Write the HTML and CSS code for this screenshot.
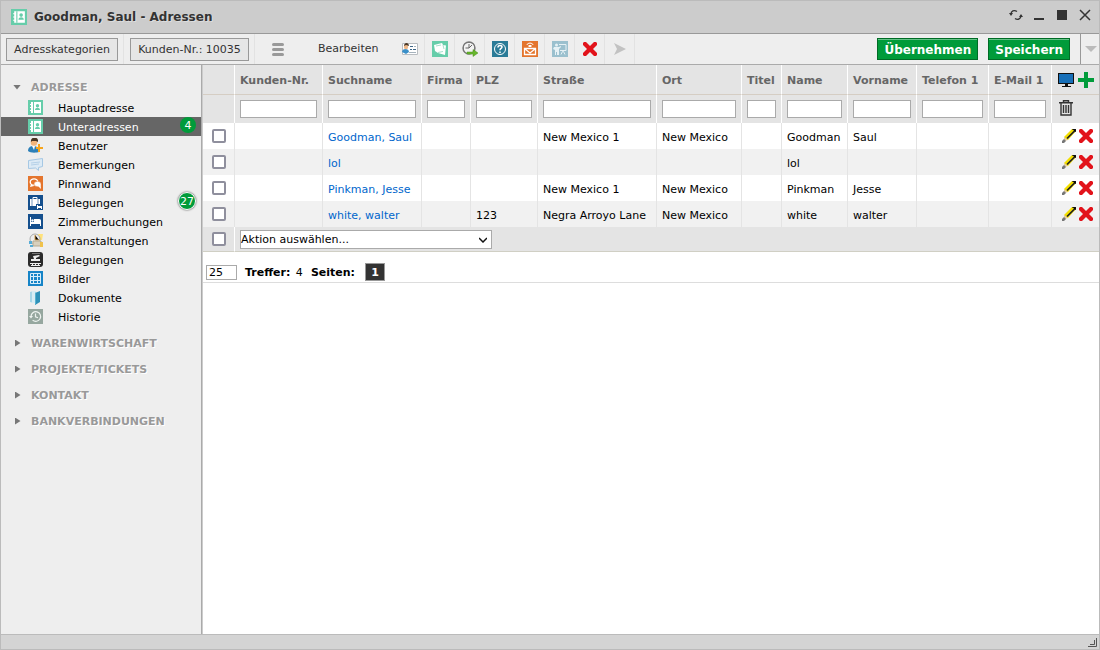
FILE: index.html
```html
<!DOCTYPE html>
<html lang="de">
<head>
<meta charset="utf-8">
<title>Goodman, Saul - Adressen</title>
<link rel="stylesheet" href="styles.css">
</head>
<body>
<svg class="sprite" aria-hidden="true">
  <symbol id="book" viewBox="0 0 15 15"><path fill="#66cdaa" d="M0 0h15v15H0z"/><path fill="#fff" d="M3 2h10v11H3zM2 4h2v1H2zM2 7h2v1H2zM2 10h2v1H2z"/><path fill="#66cdaa" d="M5 2h1v11H5zM7 10c0-3 5-3 5 0z"/><circle cx="9.500" cy="5.700" r="1.700" fill="#66cdaa"/></symbol>
  <symbol id="user" viewBox="0 0 15 15"><path fill="#2d80b8" d="M0 13c0-4 3-5 5-5 4 0 6 2 6 6-3 1-9 1-11-1z"/><path fill="#fff" d="M4 8l2 4 1-4z"/><circle cx="6" cy="4.500" r="3.300" fill="#f2b47a"/><path fill="#493524" d="M3 4c-1-5 6-6 7-2v2L8 3 4 3z"/><path fill="#f7a51c" d="M10 6h2v3h3v2h-3v3h-2v-3H8V9h2z"/></symbol>
  <symbol id="notes" viewBox="0 0 15 15"><path fill="#dceaf5" stroke="#a6c8e4" d="M.5 3.500l14-2v8l-4 1v3l-3-2.500-7 .5z"/><path stroke="#b5d1e8" d="M3 6l9-1M3 8l8-1"/></symbol>
  <symbol id="chat" viewBox="0 0 15 15"><path fill="#e4752d" d="M0 0h15v15H0z"/><ellipse cx="6" cy="6" rx="3.800" ry="3.200" fill="none" stroke="#fff" stroke-width="1.300"/><path fill="#fff" d="M3 8l-1 3 4-1z"/><ellipse cx="9.500" cy="8" rx="3.500" ry="2.700" fill="#fff" stroke="#e4752d" stroke-width=".5"/><path fill="#fff" d="M10 10l3 3-.5-5z"/></symbol>
  <symbol id="bag" viewBox="0 0 15 15"><path fill="#144f8d" d="M0 0h15v15H0z"/><path fill="#fff" d="M2 4h10v7H2z"/><path fill="none" stroke="#fff" d="M5 4V2.500h4V4"/><path stroke="#144f8d" stroke-width=".6" d="M4 4v7M10 4v7"/><path fill="#144f8d" d="M8 9h7v5H8z"/><path fill="#fff" d="M9 10h1v1h4v3h-1v-1h-3v1H9z"/></symbol>
  <symbol id="bed" viewBox="0 0 15 15"><path fill="#144f8d" d="M0 0h15v15H0z"/><path fill="#fff" d="M2 3h1v5h10v4h-1v-2H3v2H2zM6 5h5c2 0 2 1 2 3H6z"/><circle cx="4.500" cy="6.500" r="1.200" fill="#fff"/></symbol>
  <symbol id="event" viewBox="0 0 15 15"><path fill="#ffe27b" d="M10 1h5l-1 6h-3z"/><circle cx="7" cy="6" r="5" fill="#eee" stroke="#aaa"/><path stroke="#d6a04d" d="M7 2v5h4"/><path fill="#d8d0bd" stroke="#b5aa91" d="M5 8h8v5H5z"/><path fill="#56add7" d="M1 8h3v3H1zM2 12h3v2H2z"/><path fill="#f0c24b" d="M12 9h3v5h-3z"/></symbol>
  <symbol id="desk" viewBox="0 0 15 15"><rect width="15" height="15" rx="3" fill="#2b2b2b"/><path fill="#eee" d="M5 4l6-1 1 1-4 2v1h4v2H3V7h3zM2 11h11v1H2zM3 13h1v-1h1v1h2v-1h1v1h2v-1h1v1h1v1H3z"/><path fill="#777" d="M4 1h8v1H4z"/></symbol>
  <symbol id="grid" viewBox="0 0 15 15"><path fill="#1684c7" d="M0 0h15v15H0z"/><path fill="none" stroke="#d7edfa" d="M2.500 2.500h10v10h-10zM5.500 2v11M9.500 2v11M2 5.500h11M2 9.500h11"/></symbol>
  <symbol id="docs" viewBox="0 0 15 15"><path fill="#a8d6e7" d="M2 2l4-1v12l-4-1z"/><path fill="#d7edf4" d="M4 1h4v12H4z"/><path fill="#2e91b8" d="M7 3l5-2v11l-5 3z"/><path fill="#56b1d0" d="M7 3l1-.5V14l-1 1z"/></symbol>
  <symbol id="history" viewBox="0 0 15 15"><path fill="#96a79f" d="M0 0h15v15H0z"/><path fill="none" stroke="#eef3f0" stroke-width="1.200" d="M3 7.500a4.800 4.800 0 1 1 1.600 3.600M7.500 4.500v3.300l2.500 1"/><path fill="#eef3f0" d="M1 7h4L3 9.500z"/></symbol>
  <symbol id="card" viewBox="0 0 16 16"><path fill="#fff" stroke="#b9bdc1" d="M.5 2.500h15v11h-15z"/><path fill="#3b8fc8" d="M0 11c0-4 7-4 7 0l-3 2z"/><circle cx="4" cy="6" r="2.200" fill="#efb98a"/><path fill="#4c3724" d="M2 5c0-4 5-4 5 0L4 4z"/><path stroke="#3e6688" d="M8 5.500h3M8 8.500h2M11 8.500h3"/><path stroke="#a6b3bd" d="M12 5.500h2M7 11.500h7"/></symbol>
  <symbol id="note" viewBox="0 0 16 16"><path fill="#66cdaa" d="M0 0h16v16H0z"/><path fill="#fff" d="M2 4l8-2 1 2 3 .5L13 14l-7-2-3-2z"/><path fill="none" stroke="#a5e1cc" d="M11 4l1 4M4 5l5-1M6 11.500l5-1"/></symbol>
  <symbol id="clock" viewBox="0 0 16 16"><circle cx="7" cy="7" r="6" fill="#f3f3f3" stroke="#777" stroke-width="1.400"/><path fill="none" stroke="#666" d="M7 3v4H3.500M7 7l3-3M7 1v1M1 7h1M12 7h1"/><path fill="#67b62c" stroke="#49921a" stroke-width=".5" d="M5 11h6V8.500l5 3.500-5 3.500V13H5z"/></symbol>
  <symbol id="help" viewBox="0 0 16 16"><path fill="#2a7b97" d="M0 0h16v16H0z"/><circle cx="8" cy="8" r="5.500" fill="none" stroke="#fff"/><path fill="none" stroke="#fff" stroke-width="1.500" d="M6 6.500c0-3 4-2.500 4-.5 0 1.500-2 1.300-2 3.200M8 10.500V12"/></symbol>
  <symbol id="mail" viewBox="0 0 16 16"><path fill="#e4752d" d="M0 0h16v16H0z"/><path fill="none" stroke="#fff" stroke-width="1.300" d="M2.500 7.500h11v6h-11zM3 8l5 4 5-4"/><path fill="none" stroke="#fff" d="M5 4c0-2.500 6-2.500 6 0M6 5.500c1-1.500 3-1.500 4 0"/><path fill="#fff" d="M7 4h2v2H7z"/></symbol>
  <symbol id="train" viewBox="0 0 16 16"><path fill="#9bc0ce" d="M0 0h16v16H0z"/><circle cx="4.500" cy="4" r="1.500" fill="#e6f1f5"/><path fill="#e6f1f5" d="M2 6h5l2-1v1L7 8v6H5v-3H4v3H3V9L1 8z"/><path fill="none" stroke="#e6f1f5" d="M7 3.500h7v6H8M9 13.500l1.500-3h1l1.500 3"/></symbol>
  <symbol id="cross" viewBox="0 0 14 14"><path fill="#e2131b" d="M1 0h2l4 4 4-4h2l1 1v2l-4 4 4 4v2l-1 1h-2l-4-4-4 4H1l-1-1v-2l4-4-4-4V1z"/></symbol>
  <symbol id="pencil" viewBox="0 0 14 14"><path fill="#f4df00" d="M2 8l8-8h4v2l-8 9H4z"/><path stroke="#222" stroke-width="1.700" d="M5 9.500L13.500 1"/><path stroke="#222" stroke-width=".8" d="M10 0h4v3"/><path fill="#e3cba7" d="M2 8l4 3-3 1-1-1z"/><path fill="#777" d="M2 10l2 2-2 2H0v-2z"/></symbol>
</svg>
<div class="window">
  <header class="titlebar">
    <svg class="app-icon"><use href="#book"/></svg>
    <h1>Goodman, Saul - Adressen</h1>
    <div class="window-controls">
      <button aria-label="Neu laden"><svg viewBox="0 0 14 12"><path fill="none" stroke="#333" stroke-width="1.300" d="M8 2.500C5 .5 2 2 2 5M6 9.500c3 2 6 0 6-3"/><path fill="#333" d="M0 4h4L2 7zM10 8l2-3 2 3z"/></svg></button>
      <button aria-label="Minimieren"><svg viewBox="0 0 14 12"><path fill="#333" d="M2 9h10v2H2z"/></svg></button>
      <button aria-label="Maximieren"><svg viewBox="0 0 14 12"><path fill="#333" d="M2 1h10v10H2z"/></svg></button>
      <button aria-label="Schließen"><svg viewBox="0 0 14 12"><path fill="none" stroke="#333" stroke-width="1.500" d="M2 1l10 10M12 1L2 11"/></svg></button>
    </div>
  </header>
  <div class="toolbar">
    <div class="tool-cell"><button class="plain">Adresskategorien</button></div>
    <div class="tool-cell"><button class="plain wide">Kunden-Nr.: 10035</button></div>
    <div class="tool-cell edit-cell">
      <button class="icon-button" aria-label="Menü"><svg class="bars" viewBox="0 0 12 13"><path stroke="#999" stroke-width="3" stroke-linecap="round" d="M1.500 1.500h9M1.500 6.500h9M1.500 11.500h9"/></svg></button>
      <span>Bearbeiten</span>
      <button class="icon-button" aria-label="Visitenkarte"><svg><use href="#card"/></svg></button>
    </div>
    <div class="tool-cell icon-cell"><button class="icon-button" aria-label="Notiz"><svg><use href="#note"/></svg></button></div>
    <div class="tool-cell icon-cell"><button class="icon-button" aria-label="Wiedervorlage"><svg><use href="#clock"/></svg></button></div>
    <div class="tool-cell icon-cell"><button class="icon-button" aria-label="Hilfe"><svg><use href="#help"/></svg></button></div>
    <div class="tool-cell icon-cell"><button class="icon-button" aria-label="E-Mail"><svg><use href="#mail"/></svg></button></div>
    <div class="tool-cell icon-cell"><button class="icon-button" aria-label="Schulung"><svg><use href="#train"/></svg></button></div>
    <div class="tool-cell icon-cell"><button class="icon-button" aria-label="Löschen"><svg class="small"><use href="#cross"/></svg></button></div>
    <div class="tool-cell icon-cell"><button class="icon-button" aria-label="Weiter"><svg viewBox="0 0 16 16"><path fill="#c2c2c2" d="M2 2l12 6-12 6 3-6z"/></svg></button></div>
    <div class="save-actions">
      <button class="primary">Übernehmen</button>
      <button class="primary">Speichern</button>
    </div>
    <button class="more" aria-label="Mehr"><svg viewBox="0 0 12 6"><path fill="#bbb" d="M0 0h12L6 6z"/></svg></button>
  </div>
  <div class="body">
    <nav class="sidebar">
      <section>
        <h2 class="open">ADRESSE</h2>
        <ul>
          <li><a href="#"><svg><use href="#book"/></svg>Hauptadresse</a></li>
          <li><a href="#" class="active"><svg><use href="#book"/></svg>Unteradressen<span class="badge">4</span></a></li>
          <li><a href="#"><svg><use href="#user"/></svg>Benutzer</a></li>
          <li><a href="#"><svg><use href="#notes"/></svg>Bemerkungen</a></li>
          <li><a href="#"><svg><use href="#chat"/></svg>Pinnwand</a></li>
          <li><a href="#"><svg><use href="#bag"/></svg>Belegungen<span class="badge ringed">27</span></a></li>
          <li><a href="#"><svg><use href="#bed"/></svg>Zimmerbuchungen</a></li>
          <li><a href="#"><svg><use href="#event"/></svg>Veranstaltungen</a></li>
          <li><a href="#"><svg><use href="#desk"/></svg>Belegungen</a></li>
          <li><a href="#"><svg><use href="#grid"/></svg>Bilder</a></li>
          <li><a href="#"><svg><use href="#docs"/></svg>Dokumente</a></li>
          <li><a href="#"><svg><use href="#history"/></svg>Historie</a></li>
        </ul>
      </section>
      <section><h2>WARENWIRTSCHAFT</h2></section>
      <section><h2>PROJEKTE/TICKETS</h2></section>
      <section><h2>KONTAKT</h2></section>
      <section><h2>BANKVERBINDUNGEN</h2></section>
    </nav>
    <main>
      <table>
        <colgroup><col class="c-check"><col class="c-no"><col class="c-search"><col class="c-firm"><col class="c-zip"><col class="c-street"><col class="c-city"><col class="c-title"><col class="c-name"><col class="c-first"><col class="c-phone"><col class="c-mail"><col class="c-tools"></colgroup>
        <thead>
          <tr class="heads"><th></th><th>Kunden-Nr.</th><th>Suchname</th><th>Firma</th><th>PLZ</th><th>Straße</th><th>Ort</th><th>Titel</th><th>Name</th><th>Vorname</th><th>Telefon 1</th><th>E-Mail 1</th>
            <th><div class="tools"><button class="icon-button" aria-label="Spalten"><svg viewBox="0 0 16 16"><path fill="#111" d="M0 1h16v11H0zM7 12h3v2h3v1H4v-1h3z"/><path fill="#176fb8" d="M1 2h14v9H1z"/></svg></button><button class="icon-button" aria-label="Neu"><svg viewBox="0 0 16 16"><path fill="#009b3a" d="M6 0h4v6h6v4h-6v6H6v-6H0V6h6z"/></svg></button></div></th></tr>
          <tr class="filters"><td></td><td><input aria-label="Kunden-Nr."></td><td><input aria-label="Suchname"></td><td><input aria-label="Firma"></td><td><input aria-label="PLZ"></td><td><input aria-label="Straße"></td><td><input aria-label="Ort"></td><td><input aria-label="Titel"></td><td><input aria-label="Name"></td><td><input aria-label="Vorname"></td><td><input aria-label="Telefon 1"></td><td><input aria-label="E-Mail 1"></td>
            <td><div class="tools"><button class="icon-button" aria-label="Filter leeren"><svg viewBox="0 0 16 16"><path fill="none" stroke="#333" stroke-width="1.400" d="M1 2.700h14M5.500 2V.700h5V2M3 3v12h10V3M5.500 5v8M8 5v8M10.500 5v8"/></svg></button></div></td></tr>
        </thead>
        <tbody>
          <tr><td><input type="checkbox" aria-label="Goodman, Saul auswählen"></td><td></td><td><a href="#">Goodman, Saul</a></td><td></td><td></td><td>New Mexico 1</td><td>New Mexico</td><td></td><td>Goodman</td><td>Saul</td><td></td><td></td><td><div class="tools row-tools"><button class="icon-button" aria-label="Bearbeiten"><svg><use href="#pencil"/></svg></button><button class="icon-button" aria-label="Löschen"><svg><use href="#cross"/></svg></button></div></td></tr>
          <tr><td><input type="checkbox" aria-label="lol auswählen"></td><td></td><td><a href="#">lol</a></td><td></td><td></td><td></td><td></td><td></td><td>lol</td><td></td><td></td><td></td><td><div class="tools row-tools"><button class="icon-button" aria-label="Bearbeiten"><svg><use href="#pencil"/></svg></button><button class="icon-button" aria-label="Löschen"><svg><use href="#cross"/></svg></button></div></td></tr>
          <tr><td><input type="checkbox" aria-label="Pinkman, Jesse auswählen"></td><td></td><td><a href="#">Pinkman, Jesse</a></td><td></td><td></td><td>New Mexico 1</td><td>New Mexico</td><td></td><td>Pinkman</td><td>Jesse</td><td></td><td></td><td><div class="tools row-tools"><button class="icon-button" aria-label="Bearbeiten"><svg><use href="#pencil"/></svg></button><button class="icon-button" aria-label="Löschen"><svg><use href="#cross"/></svg></button></div></td></tr>
          <tr><td><input type="checkbox" aria-label="white, walter auswählen"></td><td></td><td><a href="#">white, walter</a></td><td></td><td>123</td><td>Negra Arroyo Lane</td><td>New Mexico</td><td></td><td>white</td><td>walter</td><td></td><td></td><td><div class="tools row-tools"><button class="icon-button" aria-label="Bearbeiten"><svg><use href="#pencil"/></svg></button><button class="icon-button" aria-label="Löschen"><svg><use href="#cross"/></svg></button></div></td></tr>
        </tbody>
        <tfoot>
          <tr><td><input type="checkbox" aria-label="Alle auswählen"></td><td colspan="12"><div class="select-wrap"><select aria-label="Aktion"><option>Aktion auswählen...</option></select><svg viewBox="0 0 8 6"><path fill="none" stroke="#111" stroke-width="1.500" d="M0 1l4 4 4-4"/></svg></div></td></tr>
        </tfoot>
      </table>
      <div class="pager">
        <input value="25" aria-label="Treffer pro Seite">
        <span class="hits"><b>Treffer:</b> 4</span>
        <b class="pages">Seiten:</b>
        <button class="page">1</button>
      </div>
    </main>
  </div>
  <footer><svg viewBox="0 0 9 9"><path fill="none" stroke="#555" d="M0 8.500h8.500V0M2 6.500h4.500V2"/></svg></footer>
</div>
</body>
</html>
```

FILE: styles.css
```css
* { box-sizing: border-box; }
body { margin: 0; font: 11px/14px "DejaVu Sans", sans-serif; color: #000; }
button, input, select { font: inherit; margin: 0; border-radius: 0; }
a { color: inherit; text-decoration: none; }
svg { display: block; width: 16px; height: 16px; }
.sprite { position: absolute; width: 0; height: 0; }

.window { display: flex; flex-direction: column; min-height: 100vh; border: 1px solid #bbb; background: #fff; }

.titlebar { display: flex; align-items: center; gap: 7px; height: 33px; padding: 0 7px 0 10px; background: #ccc; border-bottom: 1px solid #999; }
.titlebar h1 { margin: 0; font-size: 12px; color: #333; text-shadow: 1px 1px #ddd; }
.window-controls { display: flex; gap: 9px; margin-left: auto; padding-bottom: 4px; }
.window-controls button { padding: 0; border: 0; background: none; }
.window-controls svg { width: 14px; height: 12px; }

.toolbar { display: flex; height: 31px; background: #eee; border-bottom: 1px solid #aaa; color: #333; }
.tool-cell { display: flex; align-items: center; padding: 0 5px; border-right: 1px solid #e2e2e2; }
.tool-cell + .tool-cell { padding-left: 6px; }
.plain { min-width: 112px; height: 23px; padding: 2px 5px 0; border: 1px solid #999; background: #e6e6e6; color: #333; white-space: nowrap; }
.plain.wide { min-width: 119px; }
.icon-button { display: block; padding: 0; border: 0; background: none; }
.tool-cell.edit-cell { padding-left: 17px; padding-right: 6px; }
.edit-cell span { margin: 0 24px 0 34px; }
.bars { width: 12px; height: 13px; }
.tool-cell.icon-cell { justify-content: center; width: 30px; padding: 0; }
.small { width: 14px; height: 14px; }
.save-actions { display: flex; align-items: center; gap: 10px; margin-left: auto; padding-right: 10px; }
.primary { height: 22px; padding: 1px 6px 0; border: 1px solid #006b25; background: #009b3a; box-shadow: inset 0 1px #66c389; color: #fff; font-size: 12px; font-weight: bold; }
.more { width: 19px; padding: 0 0 0 4px; border: 0; border-left: 1px solid #999; background: none; overflow: hidden; }
.more svg { width: 12px; height: 6px; }

.body { display: flex; flex: 1; }
.sidebar { display: flex; flex-direction: column; gap: 4px; flex: none; width: 201px; padding-top: 11px; background: #eee; border-right: 1px solid #aaa; }
.sidebar h2 { display: flex; align-items: center; gap: 8px; height: 22px; margin: 0; padding: 2px 0 0 12px; font-size: 11px; color: #999; text-shadow: 1px 1px #fff; }
.sidebar h2::before { content: ""; width: 10px; height: 7px; margin-bottom: 2px; background: #777; clip-path: polygon(20% 0, 75% 50%, 20% 100%); }
.sidebar h2.open::before { height: 5px; clip-path: polygon(0 0, 80% 0, 40% 100%); }
.sidebar ul { margin: 0 0 2px; padding: 0; list-style: none; }
.sidebar li a { position: relative; display: flex; align-items: center; gap: 15px; height: 19px; padding: 2px 0 0 27px; }
.sidebar li svg { width: 15px; height: 15px; margin-bottom: 2px; }
.sidebar li a.active { background: #666; color: #fff; }
.badge { position: absolute; right: 5px; top: 0; width: 16px; height: 16px; border-radius: 8px; background: #009b3a; color: #fff; line-height: 17px; text-align: center; }
.badge.ringed { border: 1px solid #fff; box-shadow: 0 0 2px #333; width: 18px; height: 18px; border-radius: 9px; top: -1px; }

main { flex: 1; min-width: 0; border-left: 1px solid #ccc; }
table { width: 100%; table-layout: fixed; border-collapse: separate; border-spacing: 0; }
.c-check { width: 32px; } .c-no { width: 88px; } .c-search { width: 99px; } .c-firm { width: 49px; } .c-zip { width: 67px; } .c-street { width: 119px; } .c-city { width: 85px; } .c-title { width: 40px; } .c-name { width: 66px; } .c-first { width: 69px; } .c-phone { width: 72px; } .c-mail { width: 63px; } .c-tools { width: 47px; }
th, td { padding: 0 5px; text-align: left; white-space: nowrap; border-right: 1px solid #e4e4e4; }
th:last-child, td:last-child { border-right: 0; }
thead th, thead td { background: #e4e4e4; border-right-color: #fff; }
.heads th { height: 30px; padding-top: 3px; color: #666; border-bottom: 1px solid #d5cdc3; }
.filters td { height: 28px; }
.filters input { display: block; width: 100%; height: 18px; padding: 0 2px; border: 1px solid #aaa; background: #fff; }
tbody td { height: 26px; padding-top: 3px; }
tbody td:first-child { padding-top: 0; }
tbody tr:nth-child(even) td { background: #f1f1f1; }
tbody a { color: #0066cc; }
input[type="checkbox"] { appearance: none; display: block; width: 14px; height: 14px; margin: 0 auto; border: 2px solid #8f8f9d; border-radius: 2px; background: #fff; }
.tools { display: flex; gap: 4px; padding-left: 1px; padding-bottom: 3px; }
.row-tools { gap: 3px; padding: 0 0 4px 5px; }
.row-tools svg { width: 14px; height: 14px; }
tfoot td { height: 25px; background: #e4e4e4; border-right-color: #fff; border-bottom: 1px solid #d0cfc4; }
.select-wrap { position: relative; width: 252px; }
.select-wrap select { display: block; appearance: none; width: 100%; height: 19px; padding: 2px 0 0; border: 1px solid #aaa; background: #fff; color: #000; }
.select-wrap svg { position: absolute; right: 5px; top: 7px; width: 8px; height: 6px; pointer-events: none; }
.pager { display: flex; align-items: center; gap: 8px; height: 31px; padding: 10px 3px 0; border-bottom: 1px solid #ddd; }
.pager input { width: 31px; height: 15px; padding: 1px 2px 0; border: 1px solid #aaa; }
.hits, .pages { padding-top: 2px; }
.hits b { margin-right: 2px; }
.pages { margin-right: 2px; }
.page { width: 20px; height: 18px; padding: 1px 0 0; border: 1px solid #999; background: #333; color: #fff; font-weight: bold; }

footer { display: flex; align-items: flex-end; justify-content: flex-end; height: 15px; padding: 2px; background: #d4d4d4; border-top: 1px solid #bbb; }
footer svg { width: 9px; height: 9px; }
```
